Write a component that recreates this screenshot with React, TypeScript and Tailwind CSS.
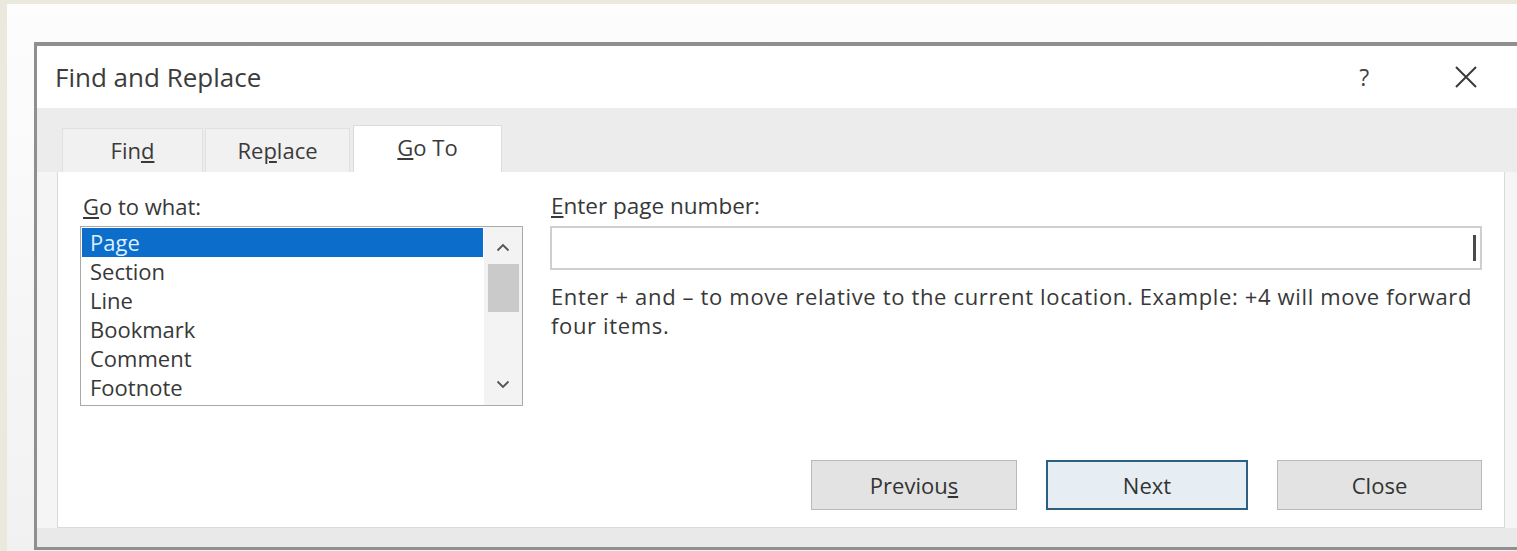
import { useState } from "react";

const items = ["Page", "Section", "Line", "Bookmark", "Comment", "Footnote"];

const Chevron = ({ up }: { up?: boolean }) => (
  <svg width="14" height="9" viewBox="0 0 14 9" className="block">
    <path
      d={up ? "M1.5 7.5 L7 2 L12.5 7.5" : "M1.5 1.5 L7 7 L12.5 1.5"}
      fill="none"
      stroke="#555"
      strokeWidth="1.8"
    />
  </svg>
);

const DialogButton = ({
  children,
  width,
  isDefault,
}: {
  children: React.ReactNode;
  width: string;
  isDefault?: boolean;
}) => (
  <button
    className={`${width} h-[50px] flex items-center justify-center text-[22px] text-[#333] ${
      isDefault
        ? "border-2 border-[#2c5f80] bg-[#e6eef4]"
        : "border border-[#b9b9b9] bg-[#e3e3e3]"
    }`}
  >
    {children}
  </button>
);

export default function App() {
  const [selected, setSelected] = useState(0);
  const [page, setPage] = useState("");

  return (
    <div
      className="w-[1517px] h-[551px] overflow-hidden bg-[#ebe8de] pt-[4px] pl-[7px]"
      style={{ fontFamily: '"Open Sans", "Noto Sans", sans-serif' }}
    >
      <div className="h-full bg-gradient-to-b from-[#fdfdfd] to-[#f1f1f1] pl-[27px] pt-[38px]">
        {/* dialog window */}
        <div className="w-[1500px] h-[508px] flex flex-col border-t-[4px] border-l-[3px] border-b-[3px] border-[#8f8f8f] bg-[#f5f5f5]">
          {/* title bar */}
          <div className="h-[62px] shrink-0 flex items-center bg-white pl-[18px] text-[#3c3c3c]">
            <span className="text-[26px] leading-none">Find and Replace</span>
            <span className="ml-[1098px] text-[23px] leading-none text-[#444]">?</span>
            <svg width="24" height="24" viewBox="0 0 24 24" className="ml-[85px]">
              <path d="M2 2 L22 22 M22 2 L2 22" stroke="#3a3a3a" strokeWidth="2" />
            </svg>
          </div>

          {/* tab strip */}
          <div className="h-[64px] shrink-0 flex items-end bg-[#ececec] pl-[25px] text-[22px] text-[#3a3a3a]">
            <div className="w-[141px] h-[44px] flex items-center justify-center bg-[#f1f1f1] border border-b-0 border-[#e0e0e0]">
              Fin<span className="underline underline-offset-2">d</span>
            </div>
            <div className="ml-[2px] w-[145px] h-[44px] flex items-center justify-center bg-[#f1f1f1] border border-b-0 border-[#e0e0e0]">
              Re<span className="underline underline-offset-2">p</span>lace
            </div>
            <div className="ml-[3px] w-[149px] h-[47px] flex items-center justify-center bg-white border border-b-0 border-[#dcdcdc] pb-[4px]">
              <span className="underline underline-offset-2">G</span>o To
            </div>
          </div>

          {/* tab page */}
          <div className="flex-1 pl-[20px]">
            <div className="w-[1448px] h-[356px] flex flex-col bg-white border border-t-0 border-[#dadada] text-[22px] text-[#383838]">
              <div className="flex pt-[20px] pl-[22px]">
                {/* go to what */}
                <div className="w-[443px] shrink-0">
                  <div className="h-[28px] leading-[28px] pl-[3px]">
                    <span className="underline underline-offset-2">G</span>o to what:
                  </div>
                  <div className="mt-[6px] h-[180px] flex border border-[#a9a9a9]">
                    <div className="flex-1 p-[1px]">
                      {items.map((item, i) => (
                        <div
                          key={item}
                          onClick={() => setSelected(i)}
                          className={`h-[29px] leading-[29px] pl-[8px] ${
                            selected === i ? "bg-[#0c6dcb] text-[#dcefff]" : ""
                          }`}
                        >
                          {item}
                        </div>
                      ))}
                    </div>
                    <div className="w-[38px] flex flex-col items-center bg-[#f3f3f3]">
                      <div className="h-[37px] flex items-center justify-center pt-[4px]">
                        <Chevron up />
                      </div>
                      <div className="w-[31px] h-[48px] bg-[#cacaca]" />
                      <div className="flex-1" />
                      <div className="h-[36px] flex items-center justify-center pb-[6px]">
                        <Chevron />
                      </div>
                    </div>
                  </div>
                </div>

                {/* page number */}
                <div className="ml-[27px] w-[932px]">
                  <div className="h-[28px] leading-[28px] pl-[1px] text-[22.5px]">
                    <span className="underline underline-offset-2">E</span>nter page number:
                  </div>
                  <div className="mt-[6px] h-[44px] flex items-center justify-end border-2 border-[#cfcfcf] pr-[4px]">
                    <input
                      value={page}
                      onChange={(e) => setPage(e.target.value)}
                      className="flex-1 h-full px-[6px] outline-none bg-transparent"
                    />
                    <div className="w-[3px] h-[26px] bg-[#4a4a4a] border-t-[3px] border-[#4a4a4a]" />
                  </div>
                  <p className="mt-[12px] leading-[28.5px] pl-[1px] tracking-[0.65px] whitespace-nowrap">
                    Enter + and – to move relative to the current location. Example: +4 will move forward
                    <br />
                    four items.
                  </p>
                </div>
              </div>

              {/* buttons */}
              <div className="mt-auto flex justify-end gap-[29px] pr-[22px] pb-[17px]">
                <DialogButton width="w-[206px]">
                  Previou<span className="underline underline-offset-2">s</span>
                </DialogButton>
                <DialogButton width="w-[202px]" isDefault>
                  Next
                </DialogButton>
                <DialogButton width="w-[205px]">Close</DialogButton>
              </div>
            </div>
          </div>

          {/* bottom edge */}
          <div className="h-[19px] shrink-0 bg-[#e9e9e9]" />
        </div>
      </div>
    </div>
  );
}
